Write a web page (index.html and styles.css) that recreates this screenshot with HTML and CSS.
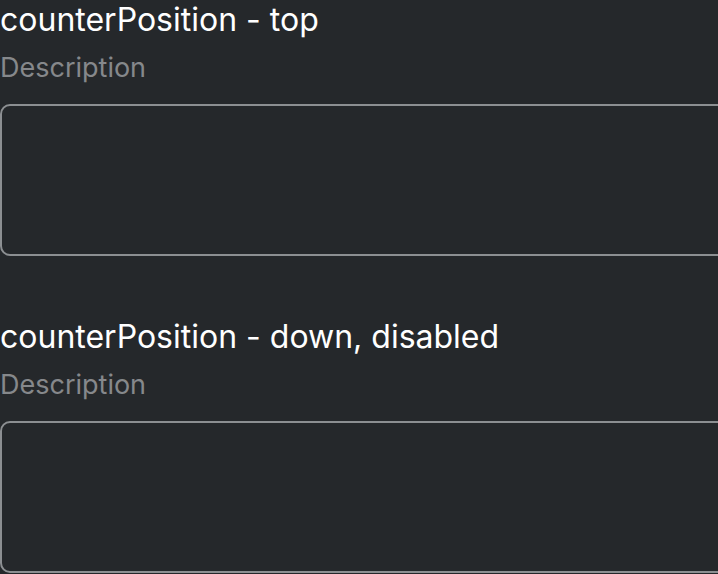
FILE: index.html
```html
<!DOCTYPE html>
<html>
<head>
<meta charset="utf-8">
<link rel="stylesheet" href="styles.css">
</head>
<body>
<div class="page">
  <section class="field">
    <h2 class="title">counterPosition - top</h2>
    <div class="desc">Description</div>
    <div class="box"></div>
  </section>
  <section class="field">
    <h2 class="title">counterPosition - down, disabled</h2>
    <div class="desc">Description</div>
    <div class="box"></div>
  </section>
</div>
</body>
</html>
```
FILE: styles.css
```css
html, body {
  margin: 0;
  padding: 0;
  background: #25282b;
  overflow: hidden;
}
.page {
  font-family: Inter, "Noto Sans", sans-serif;
  display: flex;
  flex-direction: column;
  gap: 61px;
}
.field {
  display: flex;
  flex-direction: column;
}
.title {
  margin: 0;
  font-size: 32px;
  font-weight: 400;
  color: #ffffff;
  line-height: 40px;
}
.desc {
  margin-top: 10px;
  font-size: 27px;
  color: #86888b;
  line-height: 36px;
}
.box {
  margin-top: 18px;
  width: 740px;
  height: 148px;
  border: 2px solid #8c8f92;
  border-radius: 10px;
  box-sizing: content-box;
}
```
